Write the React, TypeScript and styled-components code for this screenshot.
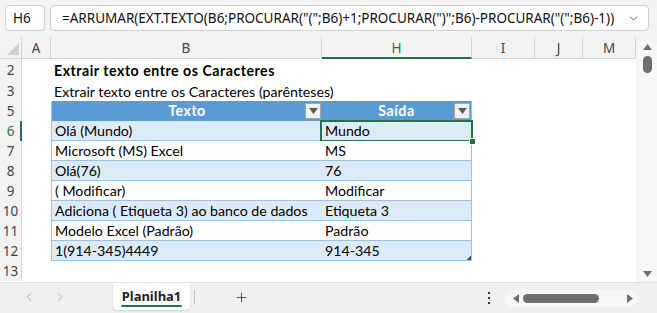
import React from 'react';
import styled, { createGlobalStyle } from 'styled-components';
import { ChevronLeft, ChevronRight, ChevronDown, Plus } from 'lucide-react';

const Global = createGlobalStyle`
  html, body { margin: 0; padding: 0; background: #f3f3f3; }
  body { width: 657px; height: 313px; overflow: hidden; }
  * { box-sizing: border-box; }
  svg { display: block; }
`;

const GREEN = '#217346';
const TBL_LINE = '#9bc2e6';
const UI_FONT = '"Noto Sans", "Open Sans", sans-serif';
const CELL_FONT = 'Lato, "Noto Sans", sans-serif';

const Window = styled.div`
  width: 657px;
  height: 313px;
  display: flex;
  flex-direction: column;
  background: #f3f3f3;
  font-family: ${UI_FONT};
  overflow: hidden;
`;

const FormulaBar = styled.div`
  height: 37px;
  display: flex;
  align-items: flex-start;
  gap: 5px;
  padding: 5px 8px 0 5px;
  flex: none;
`;

const InputBox = styled.div<{ $w?: number }>`
  height: 26px;
  ${(p) => (p.$w ? `width: ${p.$w}px;` : 'flex: 1;')}
  background: #fff;
  border: 1px solid #d1d1d1;
  border-radius: 4px;
  display: flex;
  align-items: center;
  padding: 0 8px 0 ${(p) => (p.$w ? 7 : 11)}px;
  font-size: 13.5px;
  color: #111;
  white-space: nowrap;
  overflow: hidden;
`;

const FormulaText = styled.span`
  flex: 1;
`;

const Main = styled.div`
  height: 245px;
  display: flex;
  flex: none;
`;

const Sheet = styled.div`
  width: 636px;
  background: #fff;
  display: flex;
  flex-direction: column;
  overflow: hidden;
`;

const HeaderRow = styled.div`
  height: 22px;
  display: flex;
  flex: none;
  background: #f3f3f3;
`;

const Corner = styled.div`
  width: 22px;
  flex: none;
  border-right: 1px solid #d4d4d4;
  border-bottom: 1px solid #d4d4d4;
  display: flex;
  align-items: flex-end;
  justify-content: flex-end;
  padding: 0 2px 3px 0;
`;

const ColHead = styled.div<{ $w?: number; $sel?: boolean }>`
  ${(p) => (p.$w ? `width: ${p.$w}px; flex: none;` : 'flex: 1;')}
  display: flex;
  align-items: center;
  justify-content: center;
  font-size: 13.5px;
  color: ${(p) => (p.$sel ? GREEN : '#444')};
  border-right: 1px solid #d4d4d4;
  border-bottom: ${(p) => (p.$sel ? `2px solid ${GREEN}` : '1px solid #d4d4d4')};
  padding-top: ${(p) => (p.$sel ? 1 : 0)}px;
`;

const Row = styled.div<{ $h?: number }>`
  height: ${(p) => p.$h ?? 20}px;
  display: flex;
  flex: none;
`;

const RowHead = styled.div<{ $sel?: boolean }>`
  width: 22px;
  flex: none;
  background: #f3f3f3;
  display: flex;
  align-items: center;
  justify-content: center;
  font-size: 13.5px;
  color: ${(p) => (p.$sel ? GREEN : '#444')};
  border-right: ${(p) => (p.$sel ? `2px solid ${GREEN}` : '1px solid #d4d4d4')};
  padding-left: ${(p) => (p.$sel ? 1 : 0)}px;
`;

const Cell = styled.div<{ $w: number; $bold?: boolean }>`
  width: ${(p) => p.$w}px;
  flex: none;
  display: flex;
  align-items: center;
  padding-left: 3px;
  font-family: ${CELL_FONT};
  font-size: 14.2px;
  font-weight: ${(p) => (p.$bold ? 700 : 400)};
  letter-spacing: ${(p) => (p.$bold ? 0.5 : 0)}px;
  color: #000;
  white-space: nowrap;
  overflow: visible;
`;

type TCellProps = { $first?: boolean; $band?: boolean; $head?: boolean; $last?: boolean };

const TCell = styled.div<TCellProps & { $w: number; $selected?: boolean }>`
  width: ${(p) => p.$w}px;
  flex: none;
  position: relative;
  display: flex;
  align-items: center;
  justify-content: ${(p) => (p.$head ? 'center' : 'flex-start')};
  padding-left: ${(p) => (p.$head ? 0 : 3)}px;
  font-family: ${CELL_FONT};
  font-size: 14.2px;
  font-weight: ${(p) => (p.$head ? 700 : 400)};
  letter-spacing: ${(p) => (p.$head ? 0.5 : 0)}px;
  color: ${(p) => (p.$head ? '#fff' : '#000')};
  background: ${(p) => (p.$head ? '#5b9bd5' : p.$band ? '#ddebf7' : '#fff')};
  border-bottom: 1px solid ${(p) => (p.$head ? '#5b9bd5' : TBL_LINE)};
  border-left: ${(p) => (p.$first ? `1px solid ${TBL_LINE}` : 'none')};
  border-right: ${(p) => (p.$last ? `1px solid ${TBL_LINE}` : 'none')};
  white-space: nowrap;
  ${(p) =>
    p.$selected &&
    `
    &::after {
      content: '';
      position: absolute;
      left: -2px; top: -1px; right: -2px; bottom: -2px;
      border: 2px solid ${GREEN};
      pointer-events: none;
    }
  `}
`;

const FillHandle = styled.span`
  position: absolute;
  right: -5px;
  bottom: -5px;
  width: 7px;
  height: 7px;
  background: ${GREEN};
  border: 1px solid #fff;
  z-index: 2;
`;

const ResizeMark = styled.span`
  position: absolute;
  right: 0;
  bottom: 0;
  width: 4px;
  height: 4px;
  background: linear-gradient(135deg, transparent 50%, #2f5597 50%);
`;

const FilterBtn = styled.span`
  position: absolute;
  right: 1px;
  top: 2px;
  width: 16px;
  height: 16px;
  background: #f2f2f2;
  border: 1px solid #a6a6a6;
  display: flex;
  align-items: center;
  justify-content: center;
`;

const VScroll = styled.div`
  width: 21px;
  flex: none;
  background: #f3f3f3;
  padding: 3px 0 0 1px;
  display: flex;
`;

const VTrack = styled.div`
  flex: 1;
  border-radius: 9px 9px 0 0;
  background: #f7f7f7;
  display: flex;
  flex-direction: column;
  align-items: center;
  padding: 4px 0 5px;
`;

const VThumb = styled.div`
  width: 9px;
  height: 17px;
  border-radius: 5px;
  background: #6e6e6e;
  margin-top: 6px;
`;

const Spacer = styled.div`
  flex: 1;
`;

const BottomBar = styled.div`
  height: 31px;
  flex: none;
  display: flex;
  align-items: flex-start;
  background: #f0f0f0;
  border-top: 1px solid #e0e0e0;
  padding-left: 22px;
`;

const NavGroup = styled.div`
  display: flex;
  gap: 17px;
  width: 91px;
  height: 28px;
  align-items: center;
  color: #9a9a9a;
`;

const SheetTab = styled.div`
  width: 77px;
  height: 27px;
  background: #fff;
  border-radius: 0 0 5px 5px;
  box-shadow: 0 1px 2px rgba(0, 0, 0, 0.12);
  display: flex;
  align-items: center;
  justify-content: center;
  font-weight: 700;
  font-size: 13px;
  color: #222;
  position: relative;
  padding-bottom: 2px;
`;

const TabUnderline = styled.span`
  position: absolute;
  left: 8px;
  right: 8px;
  bottom: 3px;
  height: 2px;
  background: ${GREEN};
  border-radius: 1px;
`;

const TabDivider = styled.div`
  width: 1px;
  height: 15px;
  background: #c6c6c6;
  margin: 7px 0 0 4px;
`;

const AddBtn = styled.div`
  width: 93px;
  height: 28px;
  display: flex;
  align-items: center;
  justify-content: center;
  color: #333;
`;

const Dots = styled.div`
  display: flex;
  flex-direction: column;
  gap: 3px;
  margin: 9px 15px 0 0;
  span {
    width: 2px;
    height: 2px;
    background: #333;
  }
`;

const HScroll = styled.div`
  width: 133px;
  height: 17px;
  margin: 7px 19px 0 0;
  border-radius: 9px;
  background: #f7f7f7;
  display: flex;
  align-items: center;
  padding: 0 5px 0 8px;
`;

const HThumb = styled.div`
  width: 76px;
  height: 9px;
  border-radius: 5px;
  background: #6e6e6e;
  margin-left: 4px;
`;

const Tri = ({ dir, color = '#707070' }: { dir: 'up' | 'down' | 'left' | 'right'; color?: string }) => {
  const pts = {
    up: '0,6 4.5,0 9,6',
    down: '0,0 9,0 4.5,6',
    left: '6,0 6,9 0,4.5',
    right: '0,0 0,9 6,4.5',
  }[dir];
  const horiz = dir === 'left' || dir === 'right';
  return (
    <svg width={horiz ? 6 : 9} height={horiz ? 9 : 6} viewBox={horiz ? '0 0 6 9' : '0 0 9 6'}>
      <polygon points={pts} fill={color} />
    </svg>
  );
};

const cols = { A: 29, B: 271, H: 150, I: 63, J: 48 };

const data: [string, string][] = [
  ['Olá (Mundo)', 'Mundo'],
  ['Microsoft (MS) Excel', 'MS'],
  ['Olá(76)', '76'],
  ['( Modificar)', 'Modificar'],
  ['Adiciona ( Etiqueta 3) ao banco de dados', 'Etiqueta 3'],
  ['Modelo Excel (Padrão)', 'Padrão'],
  ['1(914-345)4449', '914-345'],
];

const Rest = () => (
  <>
    <Cell $w={cols.I} />
    <Cell $w={cols.J} />
  </>
);

export default function App() {
  return (
    <Window>
      <Global />
      <FormulaBar>
        <InputBox $w={40}>H6</InputBox>
        <InputBox>
          <FormulaText>=ARRUMAR(EXT.TEXTO(B6;PROCURAR("(";B6)+1;PROCURAR(")";B6)-PROCURAR("(";B6)-1))</FormulaText>
          <ChevronDown size={13} strokeWidth={1.5} color="#444" />
        </InputBox>
      </FormulaBar>
      <Main>
        <Sheet>
          <HeaderRow>
            <Corner>
              <svg width="12" height="12" viewBox="0 0 12 12">
                <polygon points="12,0 12,12 0,12" fill="#d0d0d0" />
              </svg>
            </Corner>
            <ColHead $w={cols.A}>A</ColHead>
            <ColHead $w={cols.B}>B</ColHead>
            <ColHead $w={cols.H} $sel>H</ColHead>
            <ColHead $w={cols.I}>I</ColHead>
            <ColHead $w={cols.J}>J</ColHead>
            <ColHead>M</ColHead>
          </HeaderRow>
          <Row $h={22}>
            <RowHead>2</RowHead>
            <Cell $w={cols.A} />
            <Cell $w={cols.B} $bold>Extrair texto entre os Caracteres</Cell>
          </Row>
          <Row>
            <RowHead>3</RowHead>
            <Cell $w={cols.A} />
            <Cell $w={cols.B}>Extrair texto entre os Caracteres (parênteses)</Cell>
          </Row>
          <Row>
            <RowHead>5</RowHead>
            <Cell $w={cols.A} />
            <TCell $w={cols.B} $head $first>
              Texto
              <FilterBtn><Tri dir="down" color="#595959" /></FilterBtn>
            </TCell>
            <TCell $w={cols.H} $head $last>
              Saída
              <FilterBtn><Tri dir="down" color="#595959" /></FilterBtn>
            </TCell>
            <Rest />
          </Row>
          {data.map(([t, s], i) => {
            const rowNum = 6 + i;
            const band = i % 2 === 0;
            const selected = rowNum === 6;
            const last = i === data.length - 1;
            return (
              <Row key={rowNum}>
                <RowHead $sel={selected}>{rowNum}</RowHead>
                <Cell $w={cols.A} />
                <TCell $w={cols.B} $band={band} $first>{t}</TCell>
                <TCell $w={cols.H} $band={band} $last $selected={selected}>
                  {s}
                  {selected && <FillHandle />}
                  {last && <ResizeMark />}
                </TCell>
                <Rest />
              </Row>
            );
          })}
          <Row>
            <RowHead>13</RowHead>
          </Row>
        </Sheet>
        <VScroll>
          <VTrack>
            <Tri dir="up" />
            <VThumb />
            <Spacer />
            <Tri dir="down" />
          </VTrack>
        </VScroll>
      </Main>
      <BottomBar>
        <NavGroup>
          <ChevronLeft size={14} strokeWidth={1.3} />
          <ChevronRight size={14} strokeWidth={1.3} />
        </NavGroup>
        <SheetTab>
          Planilha1
          <TabUnderline />
        </SheetTab>
        <TabDivider />
        <AddBtn>
          <Plus size={15} strokeWidth={1.3} />
        </AddBtn>
        <Spacer />
        <Dots>
          <span />
          <span />
          <span />
        </Dots>
        <HScroll>
          <Tri dir="left" />
          <HThumb />
          <Spacer />
          <Tri dir="right" />
        </HScroll>
      </BottomBar>
    </Window>
  );
}
